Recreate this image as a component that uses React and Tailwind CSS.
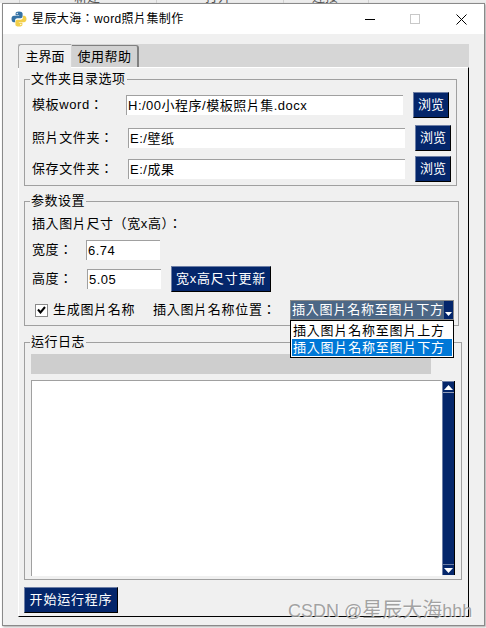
const FONT = "[font-family:'Liberation_Sans','Noto_Sans_CJK_TC',sans-serif]";

const PythonLogo = () => (
  <svg width="16" height="16" viewBox="0 0 16 16">
    <path d="M8 .5C5.600.5 4.600 1.300 4.600 2.600v1.600h3.600v.6H3C1.500 4.800.5 6 .5 8s1 3.300 2.300 3.300h1.300V9.500c0-1.300 1-2.200 2.300-2.200h3.300c1.100 0 1.900-.9 1.900-2V2.600C11.400 1.300 10.200.5 8 .5z" fill="#3572a5" />
    <path d="M8 15.500c2.400 0 3.400-.8 3.400-2.100v-1.600H7.800v-.6H13c1.500 0 2.500-1.200 2.500-3.200s-1-3.300-2.300-3.300h-1.300v1.800c0 1.300-1 2.200-2.300 2.200H6.300c-1.100 0-1.900.9-1.900 2v2.700c0 1.300 1.200 2.100 3.600 2.100z" fill="#f2cf4a" />
    <circle cx="6.200" cy="2.500" r=".7" fill="#fff" />
    <circle cx="9.800" cy="13.500" r=".7" fill="#fff" />
  </svg>
);

const NavyButton = ({ children, className = '' }) => (
  <div className={`flex items-center justify-center bg-[#04266b] text-white text-[13px] border border-t-[#6d7ea5] border-l-[#6d7ea5] border-r-black border-b-black ${className}`}>
    {children}
  </div>
);

const Entry = ({ value, className = '' }) => (
  <div className={`flex items-center bg-white border-t border-l border-[#a0a0a0] pl-[1px] text-[13px] text-black tracking-[0.500px] leading-none ${className}`}>
    {value}
  </div>
);

const Group = ({ title, className = '', children }) => (
  <div className={`relative border border-[#a0a0a0] ${className}`}>
    <span className="absolute left-[5px] top-[-10px] bg-[#f0f0f0] px-[1px] text-[13px] leading-[18px] tracking-[0.500px] text-black">{title}</span>
    {children}
  </div>
);

const FileRow = ({ label, value, labelWidth, className = '' }) => (
  <div className={`flex items-center h-[26px] pl-[7px] ${className}`}>
    <span className="text-[13px] tracking-[0.600px] whitespace-nowrap" style={{ width: labelWidth }}>{label}</span>
    <Entry value={value} className="w-[277px] h-[20px]" />
    <NavyButton className="ml-[10px] w-[36px] h-[26px]">浏览</NavyButton>
  </div>
);

const ScrollArrow = ({ up }) => (
  <div className="flex items-center justify-center h-[11px] bg-[#04266b] border-t border-[#6d7ea5]">
    <svg width="9" height="5" viewBox="0 0 9 5">
      <path d={up ? 'M4.500 0L9 5H0z' : 'M0 0h9L4.500 5z'} fill="#fff" />
    </svg>
  </div>
);

export default function App() {
  return (
    <div className={`relative w-[486px] h-[628px] bg-white overflow-hidden ${FONT}`}>
      {/* sliver of the window behind */}
      <div className="flex h-[3px] bg-[#ececec] overflow-hidden text-[13px] leading-none text-[#555]">
        <div className="w-[19px]" />
        <div className="w-[137px] border-l border-[#d0d0d0] flex items-end pl-[54px]">新建</div>
        <div className="w-[127px] border-l border-[#d0d0d0] flex items-end pl-[48px]">打开</div>
        <div className="w-[85px] border-l border-[#d0d0d0] flex items-end pl-[28px]">连接</div>
        <div className="flex-1 border-l border-[#d0d0d0]" />
      </div>

      <div className="ml-[2px] w-[483px] h-[623px] border border-[#8a8a8a] bg-[#f0f0f0] shadow-[1px_1px_2px_rgba(0,0,0,0.35)] flex flex-col">
        {/* title bar */}
        <div className="flex items-center h-[30px] bg-white pl-[8px] shrink-0">
          <PythonLogo />
          <span className="ml-[5px] text-[12px] text-black tracking-[0.400px]">星辰大海：word照片集制作</span>
          <div className="ml-auto flex items-center text-black">
            <div className="w-[10px] h-[1px] bg-black mr-[35px]" />
            <div className="w-[10px] h-[10px] border border-[#c8c8c8] mr-[36px]" />
            <svg width="11" height="11" viewBox="0 0 11 11" className="mr-[17px]">
              <path d="M.5.5l10 10M10.500.5l-10 10" stroke="#000" fill="none" />
            </svg>
          </div>
        </div>

        {/* notebook */}
        <div className="ml-[15px] mt-[10px] w-[451px]">
          <div className="flex h-[23px] bg-[#d6d6d6] text-[13px]">
            <div className="w-[53px] h-[24px] bg-[#f0f0f0] border-t border-l border-[#a8a8a8] rounded-tl-[3px] flex items-center justify-center relative z-10">主界面</div>
            <div className="ml-[1px] mt-[1px] w-[67px] h-[22px] bg-[#d2d2d2] border-r-2 border-t border-[#808080] rounded-tr-[3px] flex items-center justify-center tracking-[0.500px]">使用帮助</div>
          </div>
          <div className="h-[550px] border-l border-t border-white border-r border-b border-r-black border-b-black pl-[5px] flex flex-col text-black">
            {/* folder options */}
            <Group title="文件夹目录选项" className="mt-[11px] w-[433px] h-[107px] shrink-0">
              <FileRow label="模板word：" value="H:/00小程序/模板照片集.docx" labelWidth="94px" className="mt-[12px]" />
              <FileRow label="照片文件夹：" value="E:/壁纸" labelWidth="96px" className="mt-[7px]" />
              <FileRow label="保存文件夹：" value="E:/成果" labelWidth="96px" className="mt-[5px]" />
            </Group>

            {/* parameters */}
            <Group title="参数设置" className="mt-[15px] w-[435px] h-[125px] shrink-0">
              <div className="mt-[14px] ml-[7px] h-[16px] flex items-center text-[13px] tracking-[0.600px]">插入图片尺寸（宽x高）：</div>
              <div className="mt-[8px] ml-[7px] h-[20px] flex items-center">
                <span className="w-[54px] text-[13px] tracking-[0.600px]">宽度：</span>
                <Entry value="6.74" className="w-[74px] h-[20px]" />
              </div>
              <div className="mt-[6px] ml-[7px] h-[26px] flex items-center">
                <span className="w-[55px] text-[13px] tracking-[0.600px]">高度：</span>
                <Entry value="5.05" className="w-[74px] h-[20px]" />
                <NavyButton className="ml-[10px] w-[100px] h-[26px] tracking-[0.800px]">宽x高尺寸更新</NavyButton>
              </div>
              <div className="mt-[8px] h-[20px] flex items-center text-[13px] tracking-[0.700px]">
                <div className="ml-[10px] w-[13px] h-[13px] flex items-center justify-center bg-white border border-[#8a8a8a]">
                  <svg width="9" height="8" viewBox="0 0 9 8">
                    <path d="M1 3.500l2.500 3L8 1" stroke="#000" strokeWidth="2" fill="none" />
                  </svg>
                </div>
                <span className="ml-[5px] w-[100px] whitespace-nowrap">生成图片名称</span>
                <span className="w-[137px] whitespace-nowrap">插入图片名称位置：</span>
                <div className="relative flex w-[164px] h-[20px] border border-[#8a8a8a] bg-[#4c6786]">
                  <span className="flex-1 whitespace-nowrap text-white pl-[1px] leading-[18px] tracking-[0.800px]">插入图片名称至图片下方</span>
                  <div className="w-[9px] bg-[#04266b] flex items-end justify-center pb-[3px]">
                    <svg width="7" height="4" viewBox="0 0 7 4"><path d="M0 0h7L3.500 4z" fill="#fff" /></svg>
                  </div>
                  <div className="absolute z-20 left-[-1px] top-[19px] w-[164px] h-[38px] bg-white border border-black p-[1px] leading-[18px] tracking-[0.800px]">
                    <div className="h-[17px] text-black whitespace-nowrap pl-[1px]">插入图片名称至图片上方</div>
                    <div className="h-[17px] bg-[#0078d7] text-white whitespace-nowrap pl-[1px]">插入图片名称至图片下方</div>
                  </div>
                </div>
              </div>
            </Group>

            {/* run log */}
            <Group title="运行日志" className="mt-[16px] w-[438px] h-[238px] shrink-0">
              <div className="mt-[11px] ml-[6px] w-[400px] h-[20px] bg-[#cecece]" />
              <div className="mt-[6px] ml-[6px] flex h-[196px]">
                <div className="w-[411px] bg-white border-t border-l border-[#a0a0a0]" />
                <div className="w-[13px] mt-[1px] h-[194px] flex flex-col bg-[#04266b] border-l border-l-[#6d7ea5] border-r border-r-black">
                  <ScrollArrow up />
                  <div className="flex-1 border-t border-[#8f9bb8]" />
                  <ScrollArrow />
                </div>
              </div>
            </Group>

            <NavyButton className="mt-[7px] w-[94px] h-[26px] tracking-[0.800px] shrink-0">开始运行程序</NavyButton>
          </div>
        </div>
      </div>

      {/* watermark */}
      <span className="absolute left-[288px] top-[598px] text-[18px] leading-[24px] text-[#8c8c8c]/80 whitespace-nowrap [text-shadow:1px_1px_0_rgba(255,255,255,0.7)]">
        CSDN @<span className="text-[20px]">星辰大海</span>hhh
      </span>
    </div>
  );
}
